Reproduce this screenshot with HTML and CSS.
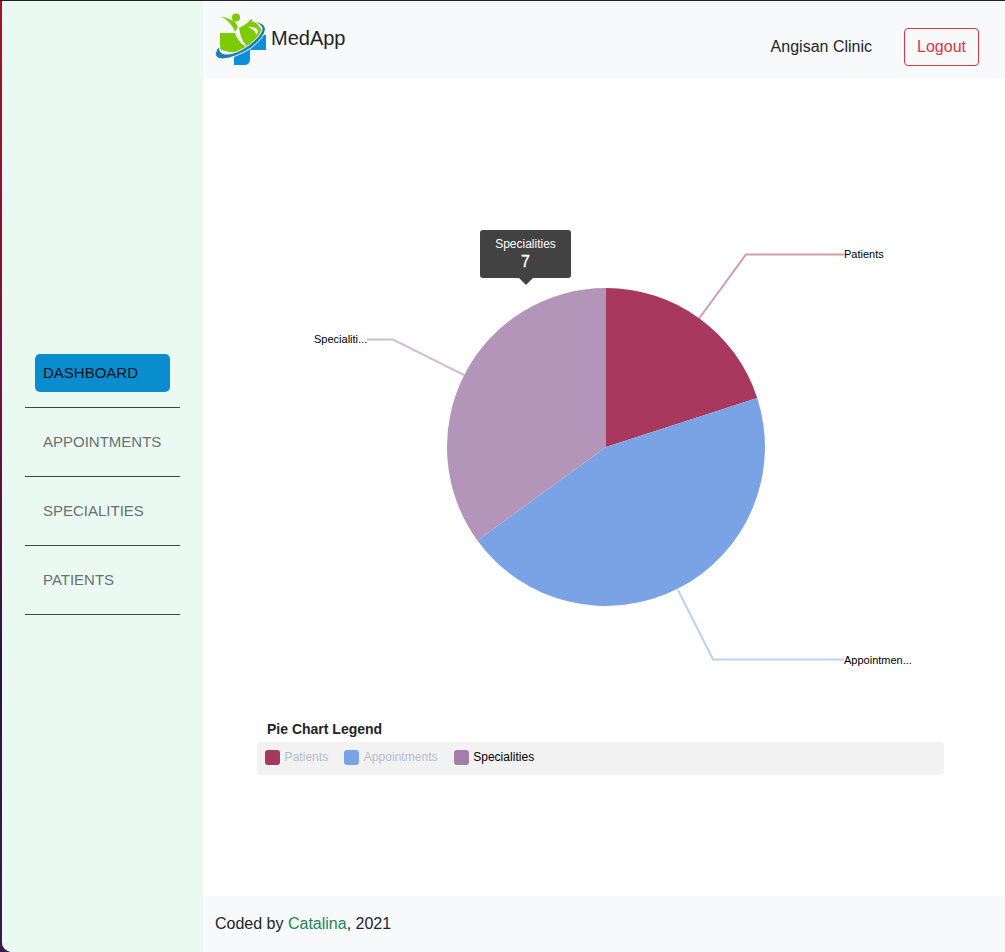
FILE: index.html
```html
<!DOCTYPE html>
<html>

<head>
    <meta charset="UTF-8">
    <title>MedApp</title>
    <link rel="stylesheet" href="styles.css">
</head>

<body>
    <div class="app">
        <aside class="sidebar">
            <ul class="nav">
                <li class="nav-item"><a class="nav-link active" href="#">DASHBOARD</a></li>
                <li class="nav-item"><a class="nav-link" href="#">APPOINTMENTS</a></li>
                <li class="nav-item"><a class="nav-link" href="#">SPECIALITIES</a></li>
                <li class="nav-item"><a class="nav-link" href="#">PATIENTS</a></li>
            </ul>
        </aside>
        <div class="main">
            <header class="topbar">
                <a class="brand" href="#">
                    <svg class="logo" viewBox="0 0 52 54">
                        <path fill="#0b8fd6" d="M35 23 L51 23 L51 38 L35 38 Z" />
                        <path fill="#0b8fd6" d="M19 41 L35 36 L35 47 Q35 53 29 53 L19 53 Z" />
                        <path fill="#7ccb05" d="M5 21 L20 21 Q23 30 30 34 L34 36 Q26 38 21 40 Q15 41 11 39 Q6 38 5 37 Z" />
                        <path fill="#7ccb05" d="M24 16 Q31 13 36 7 Q43 11 46 17 Q46 24 41 29 L34 36 Q26 30 24 16 Z" />
                        <path fill="#f8f9fa" d="M33 15 Q39 14 43 18 Q43 21 41 23 Q41 18 33 15 Z" />
                        <circle fill="#7ccb05" cx="21" cy="5.5" r="4" />
                        <path fill="#7ccb05" d="M6 4 Q14 7 19 9 Q22 12 23 15 L20 20 Q17 11 6 4 Z" />
                        <path fill="#1b7fb5" stroke="#f8f9fa" stroke-width="1" d="M37 9 Q50 10 50.5 17 Q50 25 36 36 Q20 46 8 47 Q0 47 0.5 41 Q1 37 5 34 Q3 41 10 42 Q20 43 34 33 Q48 22 47 16 Q45 11 37 9 Z" />
                    </svg>
                    <span class="brand-name">MedApp</span>
                </a>
                <div class="topbar-right">
                    <span class="clinic">Angisan Clinic</span>
                    <button class="logout">Logout</button>
                </div>
            </header>
            <main class="content">
                <div class="chart">
                    <svg class="pie" viewBox="0 0 687 500">
                        <!-- origin is x 257, y 200 of the page -->
                        <polyline class="leader" stroke="#a8385d" points="441,120 489,54.5 587,54.5" />
                        <polyline class="leader" stroke="#7aa3e5" points="421,390 456,459.5 587,459.5" />
                        <polyline class="leader" stroke="#a27ea8" points="207,175 136,139.5 110,139.5" />
                        <path fill="#a8385d" d="M349 247 L349 88 A159 159 0 0 1 500.2 197.9 Z" />
                        <path fill="#7aa3e5" d="M349 247 L500.2 197.9 A159 159 0 0 1 220.4 340.5 Z" />
                        <path fill="#b395b9" d="M349 247 L220.4 340.5 A159 159 0 0 1 349 88 Z" />
                        <text class="pie-label" x="587" y="58">Patients</text>
                        <text class="pie-label" x="587" y="464">Appointmen...</text>
                        <text class="pie-label" x="57" y="143">Specialiti...</text>
                    </svg>
                    <div class="tooltip">
                        <div class="tooltip-name">Specialities</div>
                        <div class="tooltip-value">7</div>
                    </div>
                </div>
                <div class="legend-title">Pie Chart Legend</div>
                <ul class="legend">
                    <li class="legend-item"><span class="swatch swatch-patients"></span>Patients</li>
                    <li class="legend-item"><span class="swatch swatch-appointments"></span>Appointments</li>
                    <li class="legend-item active"><span class="swatch swatch-specialities"></span>Specialities</li>
                </ul>
            </main>
            <footer class="footer">Coded by&nbsp;<a href="#">Catalina</a>, 2021</footer>
        </div>
    </div>
</body>

</html>
```
FILE: styles.css
```css
html, body {
    height: 100%;
}

body {
    margin: 0;
    overflow: hidden;
    background: linear-gradient(#a5122a, #7a0f3c 40%, #2a1440 70%, #3a1a50);
    border-top: 1px solid #222;
    box-sizing: border-box;
    font-family: "Liberation Sans", Arial, sans-serif;
    font-size: 16px;
    color: #212529;
}

a {
    text-decoration: none;
}

.app {
    display: flex;
    height: 100%;
    margin-left: 2px;
    background-color: #fff;
    border-bottom-left-radius: 10px;
    overflow: hidden;
}

.sidebar {
    width: 201px;
    flex-shrink: 0;
    display: flex;
    flex-direction: column;
    justify-content: center;
    background-color: #eafaf3;
}

.nav {
    list-style: none;
    margin: 0 0 0 23px;
    padding: 0;
    width: 155px;
}

.nav-item {
    padding: 15px 0;
    border-bottom: 1px solid #444;
}

.nav-link {
    display: block;
    margin-left: 10px;
    width: 135px;
    box-sizing: border-box;
    padding: 0 8px;
    height: 38px;
    line-height: 38px;
    font-size: 15px;
    border-radius: 5px;
    color: #6a716e;
}

.nav-link.active {
    background-color: #0a8dcf;
    color: #05121a;
}

.main {
    flex: 1;
    display: flex;
    flex-direction: column;
    min-width: 0;
}

.topbar {
    height: 77px;
    flex-shrink: 0;
    box-sizing: border-box;
    display: flex;
    justify-content: space-between;
    align-items: flex-end;
    padding: 0 26px 12px 12px;
    background-color: #f8f9fa;
}

.brand {
    display: flex;
    align-items: flex-start;
    color: #212529;
    font-size: 20px;
}

.logo {
    width: 52px;
    height: 54px;
    display: block;
}

.brand-name {
    margin: 15px 0 0 4px;
    line-height: 23px;
}

.topbar-right {
    display: flex;
    align-items: center;
}

.clinic {
    margin-right: 32px;
}

.logout {
    height: 38px;
    width: 75px;
    padding: 0;
    font: inherit;
    color: #dc3545;
    background: none;
    border: 1px solid #dc3545;
    border-radius: 4px;
}

.content {
    flex: 1;
    box-sizing: border-box;
    padding: 122px 61px 0 54px;
    background-color: #fff;
}

.chart {
    position: relative;
    height: 500px;
}

.pie {
    display: block;
    width: 687px;
    height: 500px;
}

.leader {
    fill: none;
    stroke-width: 2;
    stroke-opacity: 0.5;
}

.pie-label {
    font-size: 11px;
    fill: #000;
}

.tooltip {
    position: absolute;
    left: 223px;
    top: 30px;
    width: 91px;
    height: 48px;
    box-sizing: border-box;
    padding-top: 7px;
    background-color: #424242;
    border-radius: 3px;
    color: #fff;
    text-align: center;
}

.tooltip::after {
    content: "";
    position: absolute;
    left: 39px;
    bottom: -7px;
    border-left: 7px solid transparent;
    border-right: 7px solid transparent;
    border-top: 7px solid #424242;
}

.tooltip-name {
    font-size: 12px;
    line-height: 15px;
}

.tooltip-value {
    font-size: 16px;
    font-weight: 500;
    line-height: 19px;
    -webkit-text-stroke: 0.3px #fff;
}

.legend-title {
    margin: 20px 0 0 10px;
    font-size: 14px;
    font-weight: bold;
    line-height: 18px;
}

.legend {
    list-style: none;
    margin: 4px 0 0;
    padding: 0 8px 3px;
    height: 33px;
    box-sizing: border-box;
    display: flex;
    align-items: center;
    gap: 16px;
    background-color: #f2f2f2;
    border-radius: 3px;
}

.legend-item {
    display: flex;
    align-items: center;
    font-size: 12px;
    letter-spacing: 0.03px;
    color: #b4bccf;
}

.legend-item.active {
    color: #000;
}

.swatch {
    width: 15px;
    height: 15px;
    margin-right: 4.6px;
    border-radius: 3px;
}

.swatch-patients {
    background-color: #a8385d;
}

.swatch-appointments {
    background-color: #7aa3e5;
}

.swatch-specialities {
    background-color: #a27ea8;
}

.footer {
    height: 56px;
    flex-shrink: 0;
    box-sizing: border-box;
    display: flex;
    align-items: center;
    padding-left: 12px;
    background-color: #f8f9fa;
}

.footer a {
    color: #198754;
}
```
